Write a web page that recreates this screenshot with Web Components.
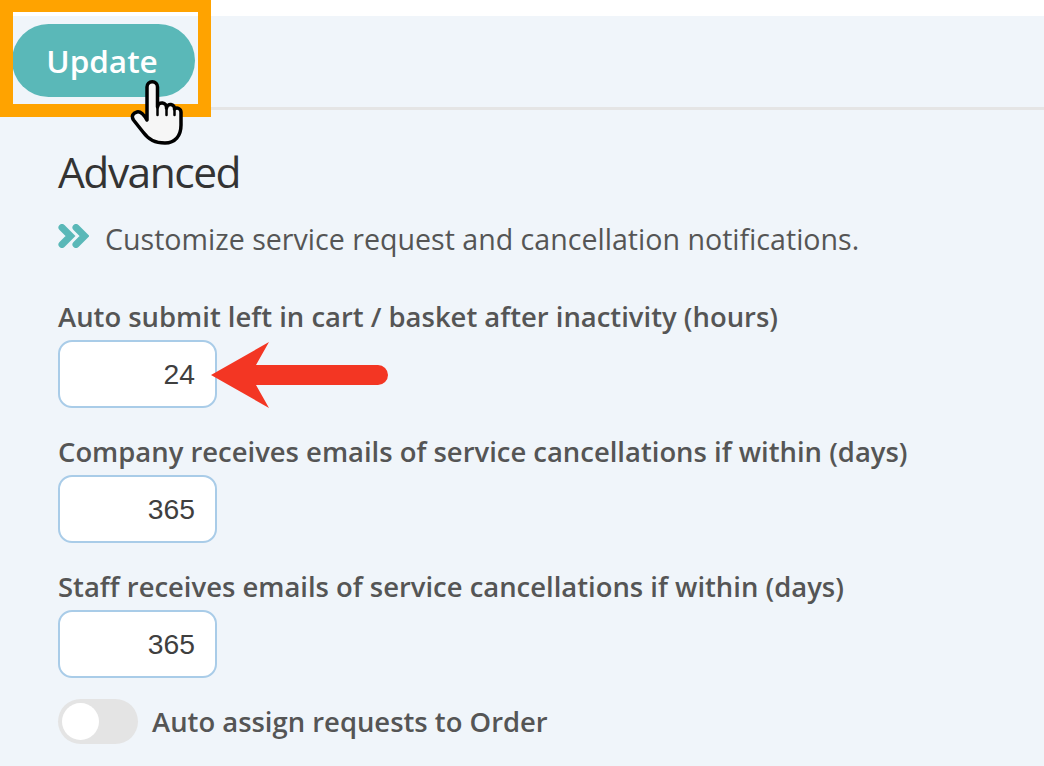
<!DOCTYPE html>
<html lang="en">
<head>
<meta charset="utf-8">
<title>Advanced settings</title>
<style>
  html, body { margin: 0; padding: 0; }
  body {
    width: 1044px;
    height: 766px;
    overflow: hidden;
    background: #fff;
    font-family: "Open Sans", sans-serif;
  }
</style>
</head>
<body>
<settings-page>
  <update-bar>Update</update-bar>
  <advanced-panel>
    <span slot="title">Advanced</span>
    <span slot="hint">Customize service request and cancellation notifications.</span>
    <number-field label="Auto submit left in cart / basket after inactivity (hours)" pointed>24</number-field>
    <number-field label="Company receives emails of service cancellations if within (days)">365</number-field>
    <number-field label="Staff receives emails of service cancellations if within (days)">365</number-field>
    <toggle-row>Auto assign requests to Order</toggle-row>
  </advanced-panel>
</settings-page>

<script>
class SettingsPage extends HTMLElement {
  constructor() {
    super();
    this.attachShadow({ mode: "open" });
    this.shadowRoot.innerHTML = `
      <style>
        :host {
          display: flex;
          flex-direction: column;
          height: 766px;
          padding-top: 16px;
          box-sizing: border-box;
          background: #fff;
        }
        .sheet {
          flex: 1;
          background: #f0f5fa;
        }
      </style>
      <div class="sheet"><slot></slot></div>
    `;
  }
}

// Toolbar with the button, plus the orange box and hand drawn over it
class UpdateBar extends HTMLElement {
  constructor() {
    super();
    this.attachShadow({ mode: "open" });
    this.shadowRoot.innerHTML = `
      <style>
        :host {
          display: flex;
          position: relative;
          height: 94px;
          padding: 8px 0 0 12px;
          box-sizing: border-box;
          border-bottom: 3px solid #e5e5e5;
        }
        button {
          width: 183px;
          height: 73px;
          border: 0;
          border-radius: 37px;
          background: #5ab8b8;
          color: #fff;
          font: 600 31.500px "Open Sans", sans-serif;
          padding: 0 3px 0 0;
        }
        .box {
          position: absolute;
          left: 0;
          top: -16px;
          width: 211px;
          height: 117px;
          box-sizing: border-box;
          border: 13px solid #ffa300;
          border-top-width: 12px;
        }
        svg {
          position: absolute;
          left: 130px;
          top: 62px;
        }
      </style>
      <button><slot></slot></button>
      <div class="box"></div>
      <svg width="54" height="68" viewBox="0 0 54 68">
        <path d="M17 42 V9 a5 5 0 0 1 10.500 0 V29 a4.500 4.500 0 0 1 9 1 a4 4 0 0 1 8 1 a4 4 0 0 1 6.500 3 V47 C51 58 45 65 35 65 C25 65 19 62 13 54 L3.500 42 C1 38 3 35 7 34 C11 33 14 37 17 42 Z" fill="#f6f6f6" stroke="#000" stroke-width="3.500" stroke-linejoin="round"/>
        <path d="M27.500 29 V37 M36.500 30 V37 M44.500 31 V37" fill="none" stroke="#000" stroke-width="2.500" stroke-linecap="round"/>
      </svg>
    `;
  }
}

class AdvancedPanel extends HTMLElement {
  constructor() {
    super();
    this.attachShadow({ mode: "open" });
    this.shadowRoot.innerHTML = `
      <style>
        :host {
          display: flex;
          flex-direction: column;
          padding: 35px 0 0 58px;
        }
        h2 {
          margin: 0;
          font: 400 42.500px/54px "Open Sans", sans-serif;
          letter-spacing: -1.500px;
          color: #333;
        }
        .hint {
          display: flex;
          align-items: center;
          gap: 16px;
          margin-top: 20px;
          font-size: 28.600px;
          line-height: 40px;
          color: #555;
        }
        .hint svg { margin-top: -6px; }
        .fields {
          display: flex;
          flex-direction: column;
          margin-top: 40px;
        }
      </style>
      <h2><slot name="title"></slot></h2>
      <div class="hint">
        <svg width="31" height="24" viewBox="0 0 31 24">
          <path d="M4 3.500 L12.500 12 L4 20.500 M18 3.500 L26.500 12 L18 20.500" fill="none" stroke="#5ab8b8" stroke-width="7" stroke-linejoin="miter" stroke-linecap="round"/>
        </svg>
        <span><slot name="hint"></slot></span>
      </div>
      <div class="fields"><slot></slot></div>
    `;
  }
}

class NumberField extends HTMLElement {
  constructor() {
    super();
    this.attachShadow({ mode: "open" });
  }

  connectedCallback() {
    this.render();
  }

  render() {
    const label = this.getAttribute("label");
    // Red annotation arrow, only on the field that asks for it
    const arrow = this.hasAttribute("pointed")
      ? `<svg class="arrow" width="182" height="70" viewBox="0 0 182 70">
           <path d="M2 35 L60 2 L47 25 H169 a10 10 0 0 1 0 20 H47 L60 68 Z" fill="#f33623"/>
         </svg>`
      : "";

    this.shadowRoot.innerHTML = `
      <style>
        :host {
          display: block;
          position: relative;
          margin-bottom: 26px;
        }
        :host(:last-of-type) { margin-bottom: 21px; }
        label {
          display: block;
          font-size: 27.430px;
          font-weight: 600;
          line-height: 36px;
          color: #555;
          margin-bottom: 5px;
        }
        .box {
          display: flex;
          align-items: center;
          justify-content: flex-end;
          width: 159px;
          height: 68px;
          box-sizing: border-box;
          padding: 1px 20px 0 0;
          border: 2px solid #a9cce8;
          border-radius: 14px;
          background: #fff;
          font: 28.300px "Liberation Sans", Arial, sans-serif;
          color: #3f3f3f;
        }
        .arrow {
          position: absolute;
          left: 151px;
          top: 41px;
        }
      </style>
      <label>${label}</label>
      <div class="box"><slot></slot></div>
      ${arrow}
    `;
  }
}

class ToggleRow extends HTMLElement {
  constructor() {
    super();
    this.attachShadow({ mode: "open" });
    this.shadowRoot.innerHTML = `
      <style>
        :host {
          display: flex;
          align-items: center;
          gap: 14px;
          font-size: 27.430px;
          font-weight: 600;
          color: #555;
        }
        .track {
          display: flex;
          align-items: center;
          width: 80px;
          height: 45px;
          box-sizing: border-box;
          padding: 0 4px;
          border-radius: 23px;
          background: #e4e4e4;
        }
        .knob {
          width: 37px;
          height: 37px;
          border-radius: 50%;
          background: #fff;
        }
      </style>
      <div class="track"><div class="knob"></div></div>
      <span><slot></slot></span>
    `;
  }
}

customElements.define("settings-page", SettingsPage);
customElements.define("update-bar", UpdateBar);
customElements.define("advanced-panel", AdvancedPanel);
customElements.define("number-field", NumberField);
customElements.define("toggle-row", ToggleRow);
</script>
</body>
</html>
